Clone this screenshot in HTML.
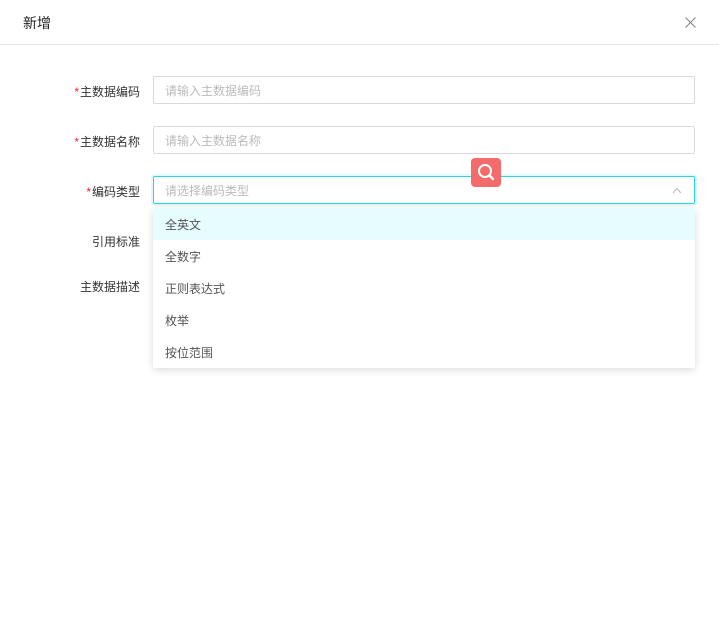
<!DOCTYPE html>
<html><head><meta charset="utf-8"><style>
*{margin:0;padding:0;box-sizing:border-box}
body{width:719px;height:634px;background:#fff;font-family:"Liberation Sans","Noto Sans CJK SC",sans-serif;font-size:12px;color:#333;position:relative;overflow:hidden}
.hd{position:absolute;left:0;top:0;width:719px;height:45px;border-bottom:1px solid #e8e8e8}
.hd .t{position:absolute;left:23px;top:13px;font-size:14px;color:#222}
.hd .x{position:absolute;left:685px;top:17px}
.lb{position:absolute;right:579px;font-size:12px;color:#333;white-space:nowrap}
.lb i{color:#f5222d;font-style:normal;margin-right:1px}
.in{position:absolute;left:153px;width:542px;height:28px;border:1px solid #d9d9d9;border-radius:2px;color:#bbb;padding-left:11px;line-height:28px;font-size:12px}
.dd{position:absolute;left:153px;top:208px;width:542px;height:160px;background:#fff;box-shadow:0 2px 8px rgba(0,0,0,.15);border-radius:2px}
.dd div{height:32px;line-height:34px;padding-left:12px;color:#555}
.dd .a{background:#e6fcfd}
.sb{position:absolute;left:471px;top:158px;width:30px;height:29px;background:#f36b6b;border-radius:4px}
</style></head><body>
<div class="hd"><div class="t">新增</div>
<svg class="x" width="11" height="11" viewBox="0 0 11 11"><path d="M0.5 0.5L10.5 10.5M10.5 0.5L0.5 10.5" stroke="#888" stroke-width="1.1"/></svg></div>
<div class="lb" style="top:83px"><i>*</i>主数据编码</div>
<div class="in" style="top:76px">请输入主数据编码</div>
<div class="lb" style="top:133px"><i>*</i>主数据名称</div>
<div class="in" style="top:126px">请输入主数据名称</div>
<div class="lb" style="top:183px"><i>*</i>编码类型</div>
<div class="in" style="top:176px;border-color:#2dd4e6;box-shadow:0 0 0 2px rgba(45,212,230,.15)">请选择编码类型
<svg style="position:absolute;right:12px;top:10px" width="10" height="7" viewBox="0 0 10 7"><path d="M1 6L5 1.5L9 6" stroke="#bbb" fill="none" stroke-width="1"/></svg></div>
<div class="lb" style="top:233px">引用标准</div>
<div class="lb" style="top:278px">主数据描述</div>
<div class="dd"><div class="a">全英文</div><div>全数字</div><div>正则表达式</div><div>枚举</div><div>按位范围</div></div>
<div class="sb"><svg width="30" height="29" viewBox="0 0 30 29"><circle cx="14" cy="13" r="6" stroke="#fff" stroke-width="2" fill="none"/><path d="M18.5 17.5L22 21" stroke="#fff" stroke-width="2.5" stroke-linecap="round"/></svg></div>
</body></html>
